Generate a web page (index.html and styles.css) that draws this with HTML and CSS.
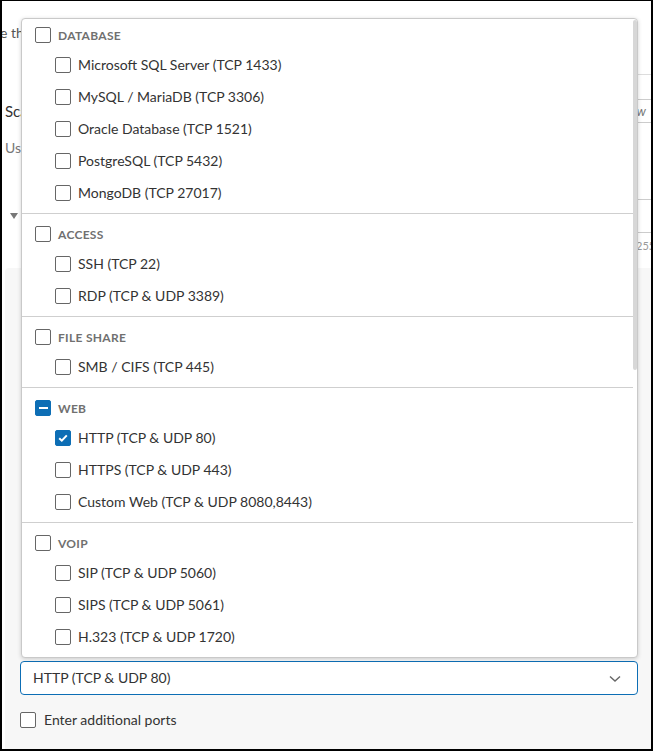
FILE: index.html
```html
<!DOCTYPE html>
<html lang="en">
<head>
<meta charset="utf-8">
<title>Service ports</title>
<link rel="stylesheet" href="styles.css">
</head>
<body>
<div class="frame">
  <header class="head">
    <p class="lead">e the services to scan.</p>
  </header>

  <div class="main">
    <div class="left">
      <h3 class="title">Scan scope</h3>
      <p class="sub">Use the list below.</p>
      <span class="caret"></span>
    </div>
    <aside class="aside">
      <div class="btn">Preview</div>
      <div class="field"></div>
      <div class="hint">255</div>
    </aside>
  </div>

  <section class="panel">
    <div class="select">
      <span class="select-value">HTTP (TCP &amp; UDP 80)</span>
      <svg class="chev" width="12" height="8" viewBox="0 0 12 8"><path d="M1 1.5 L6 6 L11 1.5" fill="none" stroke="#666" stroke-width="1.4"/></svg>
    </div>
    <label class="extra">
      <span class="cb"></span>
      <span class="txt">Enter additional ports</span>
    </label>
  </section>

  <div class="dropdown">
    <div class="list">
      <div class="group">
        <div class="ghead"><span class="cb"></span><span>Database</span></div>
        <div class="opt"><span class="cb"></span><span class="txt">Microsoft SQL Server (TCP 1433)</span></div>
        <div class="opt"><span class="cb"></span><span class="txt">MySQL / MariaDB (TCP 3306)</span></div>
        <div class="opt"><span class="cb"></span><span class="txt">Oracle Database (TCP 1521)</span></div>
        <div class="opt"><span class="cb"></span><span class="txt">PostgreSQL (TCP 5432)</span></div>
        <div class="opt"><span class="cb"></span><span class="txt">MongoDB (TCP 27017)</span></div>
      </div>
      <div class="group">
        <div class="ghead"><span class="cb"></span><span>Access</span></div>
        <div class="opt"><span class="cb"></span><span class="txt">SSH (TCP 22)</span></div>
        <div class="opt"><span class="cb"></span><span class="txt">RDP (TCP &amp; UDP 3389)</span></div>
      </div>
      <div class="group">
        <div class="ghead"><span class="cb"></span><span>File Share</span></div>
        <div class="opt"><span class="cb"></span><span class="txt">SMB / CIFS (TCP 445)</span></div>
      </div>
      <div class="group">
        <div class="ghead"><span class="cb mixed"><span class="dash"></span></span><span>Web</span></div>
        <div class="opt"><span class="cb checked"><svg width="16" height="16" viewBox="0 0 16 16"><path d="M4.2 8.2 L6.8 10.7 L11.8 5.4" fill="none" stroke="#fff" stroke-width="2"/></svg></span><span class="txt">HTTP (TCP &amp; UDP 80)</span></div>
        <div class="opt"><span class="cb"></span><span class="txt">HTTPS (TCP &amp; UDP 443)</span></div>
        <div class="opt"><span class="cb"></span><span class="txt">Custom Web (TCP &amp; UDP 8080,8443)</span></div>
      </div>
      <div class="group">
        <div class="ghead"><span class="cb"></span><span>VoIP</span></div>
        <div class="opt"><span class="cb"></span><span class="txt">SIP (TCP &amp; UDP 5060)</span></div>
        <div class="opt"><span class="cb"></span><span class="txt">SIPS (TCP &amp; UDP 5061)</span></div>
        <div class="opt"><span class="cb"></span><span class="txt">H.323 (TCP &amp; UDP 1720)</span></div>
      </div>
    </div>
    <div class="thumb"></div>
  </div>
</div>
</body>
</html>
```

FILE: styles.css
```css
html, body {
  margin: 0;
  padding: 0;
  background: #000;
}

body {
  font-family: Lato, "Open Sans", sans-serif;
  color: #333;
}

.frame {
  position: relative;
  margin: 1px 0 0 2px;
  width: 649px;
  height: 748px;
  overflow: hidden;
  background: #fff;
}

/* page behind the open menu */
.head {
  height: 73px;
  box-sizing: border-box;
  padding-top: 22px;
}

.lead {
  margin: 0 0 0 -2px;
  font-size: 14px;
  line-height: 20px;
  color: #555;
  white-space: nowrap;
}

.main {
  display: flex;
  height: 194px;
}

.left {
  flex: 1;
  padding-left: 3px;
}

.title {
  margin: 27px 0 0;
  font-size: 15px;
  font-weight: 400;
  line-height: 20px;
  color: #333;
}

.sub {
  margin: 17px 0 0;
  font-size: 14px;
  line-height: 20px;
  color: #777;
  white-space: nowrap;
}

.caret {
  display: block;
  margin: 55px 0 0 5px;
  width: 0;
  height: 0;
  border-left: 4px solid transparent;
  border-right: 4px solid transparent;
  border-top: 6px solid #777;
}

.aside {
  width: 100px;
  border-top: 1px solid #ddd;
}

.btn {
  margin-top: 24px;
  height: 24px;
  box-sizing: border-box;
  border-top: 1px solid #ccc;
  border-bottom: 1px solid #ccc;
  padding-right: 5px;
  text-align: right;
  font-size: 13px;
  line-height: 22px;
  font-style: italic;
  color: #777;
}

.field {
  margin-top: 76px;
  height: 34px;
  box-sizing: border-box;
  border-top: 1px solid #ccc;
  border-bottom: 1px solid #ccc;
}

.hint {
  margin-top: 5px;
  padding-left: 85px;
  font-size: 11px;
  line-height: 16px;
  color: #999;
}

/* grey form panel holding the select */
.panel {
  margin-left: 3px;
  height: 481px;
  box-sizing: border-box;
  padding: 393px 13px 0 15px;
  background: #f7f7f7;
  border-top-left-radius: 4px;
}

.select {
  display: flex;
  align-items: center;
  justify-content: space-between;
  height: 34px;
  box-sizing: border-box;
  border: 1px solid #0d6eb5;
  border-radius: 4px;
  background: #fff;
  padding: 0 16px 0 12px;
  font-size: 14px;
  color: #333;
}

.select-value {
  margin-bottom: 2px;
}

.chev {
  display: block;
  margin-top: 1px;
}

.extra {
  display: flex;
  align-items: center;
  gap: 8px;
  margin: 13px 0 0 0;
  height: 24px;
  font-size: 14px;
  color: #333;
}

/* checkbox */
.cb {
  flex: none;
  display: inline-flex;
  align-items: center;
  justify-content: center;
  width: 16px;
  height: 16px;
  box-sizing: border-box;
  border: 1px solid #666;
  border-radius: 2px;
  background: #fff;
}

.cb.checked,
.cb.mixed {
  border-color: #0d6eb5;
  background: #0d6eb5;
}

.cb.checked svg {
  display: block;
  margin: -1px;
}

.cb .dash {
  display: block;
  width: 9px;
  height: 2px;
  background: #fff;
}

.txt {
  margin-bottom: 2px;
}

/* the open multi-select menu */
.dropdown {
  position: absolute;
  left: 19px;
  top: 17px;
  width: 617px;
  height: 640px;
  box-sizing: border-box;
  border: 1px solid #c9c9c9;
  border-radius: 4px;
  background: #fff;
  box-shadow: 0 1px 4px rgba(0, 0, 0, 0.18);
  overflow: hidden;
}

.list {
  margin-right: 4px;
}

.group {
  padding: 6px 0 4px;
  border-top: 1px solid #cfcfcf;
}

.group:first-child {
  padding-top: 2px;
  border-top: none;
}

.ghead {
  display: flex;
  align-items: center;
  gap: 7px;
  height: 28px;
  padding-left: 13px;
  font-size: 12px;
  font-weight: 700;
  letter-spacing: 0.3px;
  text-transform: uppercase;
  color: #707070;
}

.opt {
  display: flex;
  align-items: center;
  gap: 7px;
  height: 32px;
  padding-left: 33px;
  font-size: 14px;
  color: #333;
}

.thumb {
  position: absolute;
  right: 0;
  top: 1px;
  width: 4px;
  height: 350px;
  border-radius: 2px;
  background: #d7d7d7;
}
```
